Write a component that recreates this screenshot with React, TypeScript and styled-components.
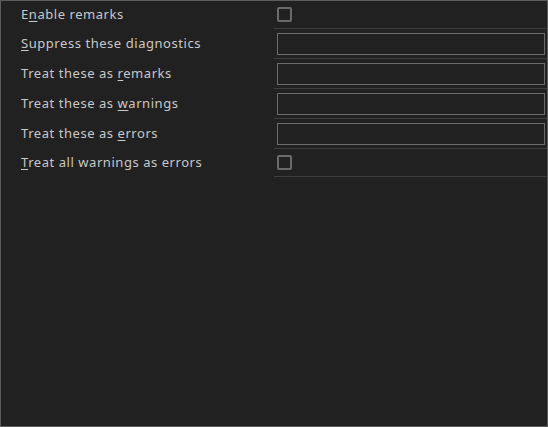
import React from "react";
import styled, { createGlobalStyle } from "styled-components";

const GlobalStyle = createGlobalStyle`
  html, body {
    margin: 0;
    padding: 0;
    background-color: #212121;
  }
`;

const Panel = styled.div`
  box-sizing: border-box;
  width: 548px;
  height: 427px;
  background-color: #212121;
  border: 1px solid #5c5c5c;
  font-family: "Noto Sans", "DejaVu Sans", sans-serif;
  font-size: 13px;
  letter-spacing: 0.55px;
  color: #c8c8c8;
`;

const Row = styled.div<{ $short?: boolean }>`
  display: grid;
  grid-template-columns: 273px 1fr;
  height: ${(p) => (p.$short ? 28 : 30)}px;
`;

const Label = styled.div`
  display: flex;
  align-items: center;
  padding: 0 0 3px 20px;
  white-space: pre;
`;

const Key = styled.span`
  text-decoration: underline;
  text-underline-offset: 2px;
`;

const Value = styled.div`
  display: flex;
  align-items: center;
  padding: 0 2px 0 3px;
  border-bottom: 1px solid #3e3e3e;
`;

const Check = styled.div`
  box-sizing: border-box;
  width: 15px;
  height: 15px;
  border: 2px solid #6a6a6a;
  border-radius: 2px;
`;

const TextBox = styled.div`
  box-sizing: border-box;
  width: 100%;
  height: 22px;
  border: 1px solid #6c6c6c;
  background-color: #212121;
`;

type Item = {
  before: string;
  key: string;
  after: string;
  kind: "check" | "text";
};

const items: Item[] = [
  { before: "E", key: "n", after: "able remarks", kind: "check" },
  { before: "", key: "S", after: "uppress these diagnostics", kind: "text" },
  { before: "Treat these as ", key: "r", after: "emarks", kind: "text" },
  { before: "Treat these as ", key: "w", after: "arnings", kind: "text" },
  { before: "Treat these as ", key: "e", after: "rrors", kind: "text" },
  { before: "", key: "T", after: "reat all warnings as errors", kind: "check" },
];

export default function App() {
  return (
    <>
      <GlobalStyle />
      <Panel>
        {items.map((it, i) => (
          <Row key={i} $short={i === 0 || i === items.length - 1}>
            <Label>
              <span>
                {it.before}
                <Key>{it.key}</Key>
                {it.after}
              </span>
            </Label>
            <Value>{it.kind === "check" ? <Check /> : <TextBox />}</Value>
          </Row>
        ))}
      </Panel>
    </>
  );
}
